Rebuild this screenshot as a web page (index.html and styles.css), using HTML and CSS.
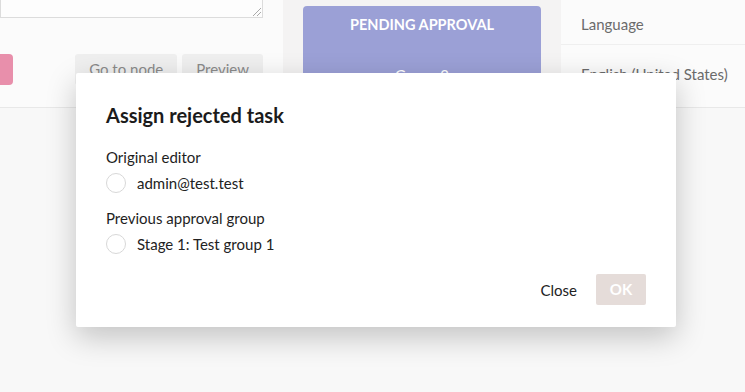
FILE: index.html
```html
<!DOCTYPE html>
<html>
<head>
<meta charset="utf-8">
<link rel="stylesheet" href="styles.css">
</head>
<body>
<div class="page">
  <section class="editor">
    <div class="textarea"><span class="grip"></span></div>
    <div class="actions">
      <span class="pink"></span>
      <div class="btns">
        <span class="btn">Go to node</span>
        <span class="btn">Preview</span>
      </div>
    </div>
  </section>
  <div class="gutter">
    <div class="status">
      <div class="status-title">PENDING APPROVAL</div>
      <div class="status-sub">Group 2</div>
    </div>
  </div>
  <section class="info">
    <div class="info-row">Language</div>
    <div class="info-row value">English (United States)</div>
  </section>
</div>

<div class="modal">
  <h2 class="modal-title">Assign rejected task</h2>
  <div class="group">
    <div class="group-label">Original editor</div>
    <label class="option"><span class="radio"></span>admin@test.test</label>
  </div>
  <div class="group">
    <div class="group-label">Previous approval group</div>
    <label class="option"><span class="radio"></span>Stage 1: Test group 1</label>
  </div>
  <div class="modal-footer">
    <span class="close">Close</span>
    <span class="ok">OK</span>
  </div>
</div>
</body>
</html>
```
FILE: styles.css
```css
html, body {
  margin: 0;
  padding: 0;
}
body {
  width: 745px;
  height: 392px;
  overflow: hidden;
  background: #f8f8f8;
  font-family: Lato, "Open Sans", sans-serif;
  position: relative;
}
.page {
  display: flex;
  height: 108px;
  background: #f4f3f3;
}
.editor {
  width: 283px;
  background: #fbfbfb;
  border-bottom: 1px solid #e8e8e8;
  box-sizing: border-box;
  display: flex;
  flex-direction: column;
}
.textarea {
  height: 18px;
  width: 263px;
  border: 1px solid #dcdcdc;
  border-top: none;
  box-sizing: border-box;
  background: #fdfdfd;
  position: relative;
}
.grip {
  position: absolute;
  right: 1px;
  bottom: 1px;
  width: 8px;
  height: 8px;
  background: linear-gradient(135deg, transparent 45%, #aaa 45%, #aaa 55%, transparent 55%, transparent 70%, #aaa 70%, #aaa 80%, transparent 80%);
}
.actions {
  display: flex;
  justify-content: space-between;
  margin-top: 36px;
  width: 263px;
}
.pink {
  width: 13px;
  height: 31px;
  background: #e88fab;
  border-radius: 0 4px 4px 0;
}
.btns {
  display: flex;
  gap: 5px;
}
.btn {
  background: #efefef;
  color: #8a8a8a;
  font-size: 15px;
  height: 31px;
  line-height: 31px;
  padding: 0 14px;
  border-radius: 3px;
}
.gutter {
  width: 278px;
  padding: 6px 20px 0 20px;
  box-sizing: border-box;
}
.status {
  background: #9ba0d6;
  border-radius: 4px;
  height: 110px;
  text-align: center;
  color: #fff;
}
.status-title {
  font-weight: 700;
  font-size: 14.5px;
  padding-top: 10px;
}
.status-sub {
  font-size: 15px;
  padding-top: 33px;
}
.info {
  flex: 1;
  background: #fbfbfb;
  border-bottom: 1px solid #e8e8e8;
}
.info-row {
  color: #6b6b6b;
  font-size: 15px;
  height: 45px;
  line-height: 48px;
  padding-left: 20px;
  border-bottom: 1px solid #efefef;
  box-sizing: border-box;
}
.info-row.value {
  border-bottom: none;
  line-height: 58px;
}

.modal {
  position: absolute;
  left: 76px;
  top: 73px;
  width: 600px;
  height: 254px;
  box-sizing: border-box;
  background: #fff;
  border-radius: 2px;
  padding: 28px 30px 0 30px;
  box-shadow: 0 10px 30px rgba(0, 0, 0, 0.22);
  color: #1b1b1b;
}
.modal-title {
  margin: 0 0 18px 0;
  font-size: 20px;
  font-weight: 700;
  line-height: 28px;
}
.group {
  margin-bottom: 15px;
}
.group-label {
  font-size: 15px;
  line-height: 20px;
  color: #1e1e1e;
}
.option {
  display: flex;
  align-items: center;
  font-size: 15px;
  line-height: 20px;
  margin-top: 6px;
  color: #222;
}
.radio {
  width: 18px;
  height: 18px;
  border: 1px solid #d8d8d8;
  border-radius: 50%;
  margin-right: 11px;
}
.modal-footer {
  display: flex;
  justify-content: flex-end;
  align-items: center;
  gap: 19px;
  margin-top: 20px;
}
.close {
  font-size: 15px;
  color: #222;
}
.ok {
  background: #e5dcd9;
  color: #fff;
  font-weight: 700;
  font-size: 15px;
  width: 50px;
  height: 31px;
  line-height: 31px;
  text-align: center;
  border-radius: 2px;
}
```
